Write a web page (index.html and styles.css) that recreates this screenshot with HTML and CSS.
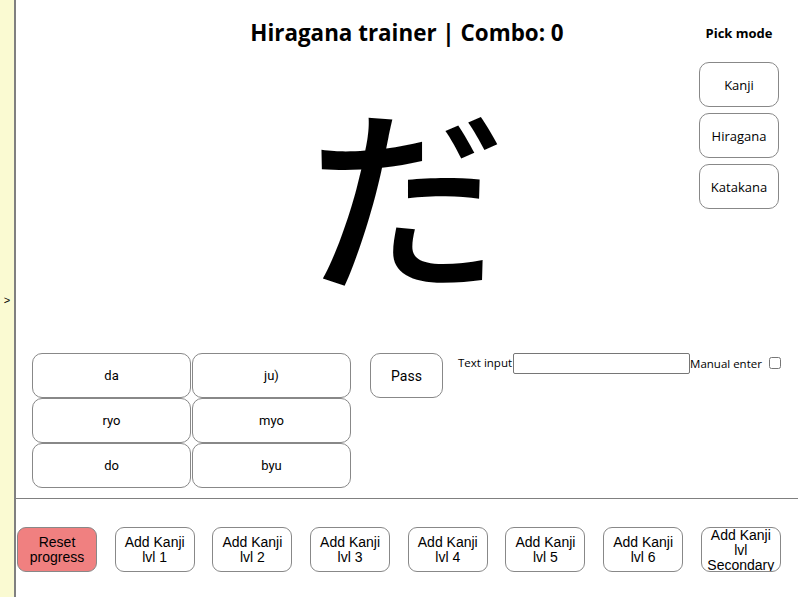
FILE: index.html
```html
<!DOCTYPE html>
<html>
<head>
<meta charset="utf-8">
<link rel="stylesheet" href="styles.css">
</head>
<body>
<div class="app">
  <aside class="sidebar"><span class="toggle">&gt;</span></aside>
  <main class="main">
    <div class="top">
      <div class="spacer"></div>
      <div class="center">
        <h1 class="title">Hiragana trainer | Combo: 0</h1>
        <div class="glyph">だ</div>
      </div>
      <div class="modes">
        <div class="modes-title">Pick mode</div>
        <button class="mode-btn">Kanji</button>
        <button class="mode-btn">Hiragana</button>
        <button class="mode-btn">Katakana</button>
      </div>
    </div>
    <div class="controls">
      <div class="answers">
        <button class="ans">da</button>
        <button class="ans">ju)</button>
        <button class="ans">ryo</button>
        <button class="ans">myo</button>
        <button class="ans">do</button>
        <button class="ans">byu</button>
      </div>
      <button class="pass">Pass</button>
      <div class="text-entry">
        <label class="lbl">Text input</label><input class="txt" type="text"><label class="lbl manual">Manual enter</label><input class="chk" type="checkbox">
      </div>
    </div>
    <hr class="divider">
    <div class="bottom">
      <button class="lvl reset">Reset progress</button>
      <button class="lvl">Add Kanji lvl 1</button>
      <button class="lvl">Add Kanji lvl 2</button>
      <button class="lvl">Add Kanji lvl 3</button>
      <button class="lvl">Add Kanji lvl 4</button>
      <button class="lvl">Add Kanji lvl 5</button>
      <button class="lvl">Add Kanji lvl 6</button>
      <button class="lvl">Add Kanji lvl Secondary</button>
    </div>
  </main>
</div>
</body>
</html>
```
FILE: styles.css
```css
html, body {
  margin: 0;
  padding: 0;
  background: #fff;
  color: #000;
}
body {
  width: 798px;
  height: 597px;
  overflow: hidden;
  font-family: "Open Sans", "Noto Sans", sans-serif;
}
.app {
  display: flex;
  height: 597px;
}
.sidebar {
  width: 14px;
  background: #fafad2;
  border-right: 2px solid #808080;
  display: flex;
  align-items: center;
  justify-content: center;
  font-family: "Liberation Sans", sans-serif;
  font-size: 11px;
}
.toggle {
  margin-top: 2px;
}
.main {
  flex: 1;
  display: flex;
  flex-direction: column;
}
.top {
  display: flex;
  height: 353px;
}
.spacer {
  width: 100px;
}
.center {
  flex: 1;
  display: flex;
  flex-direction: column;
  align-items: center;
}
.title {
  margin: 18px 0 0;
  font-size: 22.4px;
  font-weight: 700;
  line-height: 30px;
  white-space: nowrap;
}
.glyph {
  font-family: "Noto Sans CJK JP", sans-serif;
  font-size: 198px;
  font-weight: 500;
  line-height: 1;
  margin-top: 41px;
}
.modes {
  width: 100px;
  padding-left: 1px;
  box-sizing: border-box;
  display: flex;
  flex-direction: column;
  align-items: flex-start;
  gap: 6px;
}
.modes-title {
  width: 80px;
  text-align: center;
  font-weight: 700;
  font-size: 13px;
  margin-top: 24px;
  line-height: 18px;
  margin-bottom: 14px;
}
.mode-btn {
  width: 80px;
  height: 45px;
  background: #fff;
  border: 1px solid #888;
  border-radius: 10px;
  font-family: "Open Sans", "Noto Sans", sans-serif;
  font-size: 13px;
  color: #000;
  padding: 0;
}
.controls {
  display: flex;
  align-items: flex-start;
  padding-left: 16px;
  height: 145px;
}
.answers {
  display: grid;
  grid-template-columns: 159px 159px;
  grid-auto-rows: 45px;
  column-gap: 1px;
  row-gap: 0;
}
.ans, .pass {
  background: #fff;
  border: 1px solid #888;
  border-radius: 10px;
  font-family: "Roboto", "Liberation Sans", sans-serif;
  font-size: 13px;
  color: #000;
  padding: 0;
}
.pass {
  width: 73px;
  height: 45px;
  margin-left: 19px;
  font-size: 14px;
}
.text-entry {
  display: flex;
  align-items: flex-start;
  margin-left: 15px;
  font-size: 11.5px;
}
.lbl {
  line-height: 20px;
}
.txt {
  width: 177px;
  height: 21px;
  box-sizing: border-box;
  border: 1px solid #767676;
  border-radius: 2px;
  margin: 0 0 0 1px;
  padding: 0;
}
.manual {
  margin-top: 1px;
}
.chk {
  width: 12px;
  height: 12px;
  margin: 4px 0 0 7px;
}
.divider {
  margin: 0;
  border: none;
  border-top: 1px solid #808080;
  height: 0;
}
.bottom {
  display: flex;
  gap: 17.7px;
  padding: 28px 0 0 1px;
}
.lvl {
  width: 80px;
  height: 45px;
  background: #fff;
  border: 1px solid #888;
  border-radius: 9px;
  font-family: "Liberation Sans", sans-serif;
  font-size: 14px;
  line-height: 15px;
  color: #000;
  padding: 0 2px;
  overflow: hidden;
}
.reset {
  background: #f08080;
}
```
